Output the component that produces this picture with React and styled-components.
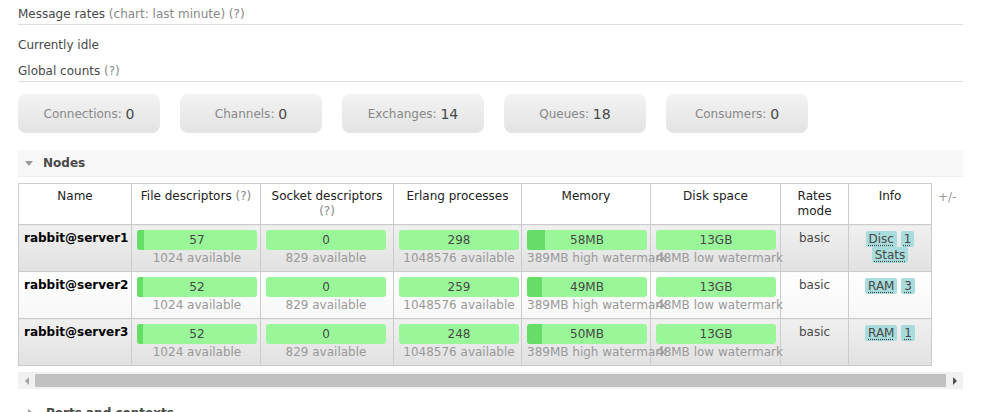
import React from 'react';
import styled, { createGlobalStyle } from 'styled-components';

const GlobalStyle = createGlobalStyle`
  html, body {
    margin: 0;
    background: #fff;
  }
  body {
    font-family: "DejaVu Sans", Verdana, sans-serif;
    font-size: 12px;
    color: #484848;
    overflow: hidden;
  }
`;

const counts = [
  { label: 'Connections', value: 0 },
  { label: 'Channels', value: 0 },
  { label: 'Exchanges', value: 14 },
  { label: 'Queues', value: 18 },
  { label: 'Consumers', value: 0 },
];

const nodes = [
  { name: 'rabbit@server1', fd: 57, sockets: 0, procs: 298, mem: 58, info: ['Disc', '1', 'Stats'] },
  { name: 'rabbit@server2', fd: 52, sockets: 0, procs: 259, mem: 49, info: ['RAM', '3'] },
  { name: 'rabbit@server3', fd: 52, sockets: 0, procs: 248, mem: 50, info: ['RAM', '1'] },
];

const StatusBar = ({ value, used, total, sub }) => (
  <>
    <Bar>
      {used > 0 && <BarFill style={{ width: `${Math.round((used / total) * 120)}px` }} />}
      <BarLabel>{value}</BarLabel>
    </Bar>
    <BarSub>{sub}</BarSub>
  </>
);

export default function App() {
  return (
    <Main>
      <GlobalStyle />
      <SubHeading>
        Message rates <Muted>(chart: last minute) (?)</Muted>
      </SubHeading>
      <Idle>Currently idle</Idle>
      <SubHeading>
        Global counts <Muted>(?)</Muted>
      </SubHeading>

      <Counts>
        {counts.map(({ label, value }) => (
          <CountBox key={label}>
            {label}: <CountValue>{value}</CountValue>
          </CountBox>
        ))}
      </Counts>

      <SectionHeader $open>
        <Toggle $open />
        Nodes
      </SectionHeader>

      <Table>
        <thead>
          <tr>
            <Th $w={113}>Name</Th>
            <Th $w={129}>
              File descriptors <Muted>(?)</Muted>
            </Th>
            <Th $w={133}>
              Socket descriptors <Muted>(?)</Muted>
            </Th>
            <Th $w={128}>Erlang processes</Th>
            <Th $w={129}>Memory</Th>
            <Th $w={130}>Disk space</Th>
            <Th $w={68}>Rates mode</Th>
            <Th $w={83}>Info</Th>
            <PlusMinus>+/-</PlusMinus>
          </tr>
        </thead>
        <tbody>
          {nodes.map((n, i) => (
            <Row key={n.name} $alt={i % 2 === 0}>
              <NameCell>{n.name}</NameCell>
              <Td>
                <StatusBar value={n.fd} used={n.fd} total={1024} sub="1024 available" />
              </Td>
              <Td>
                <StatusBar value={n.sockets} used={n.sockets} total={829} sub="829 available" />
              </Td>
              <Td>
                <StatusBar value={n.procs} used={0} total={1048576} sub="1048576 available" />
              </Td>
              <Td>
                <StatusBar value={`${n.mem}MB`} used={n.mem} total={389} sub="389MB high watermark" />
              </Td>
              <Td>
                <StatusBar value="13GB" used={0} total={1} sub="48MB low watermark" />
              </Td>
              <CenterCell>basic</CenterCell>
              <CenterCell>
                {n.info.map((b) => (
                  <React.Fragment key={b}>
                    <Badge>{b}</Badge>{' '}
                  </React.Fragment>
                ))}
              </CenterCell>
              <EmptyCell />
            </Row>
          ))}
        </tbody>
      </Table>

      <Scrollbar>
        <ScrollArrow>
          <ArrowGlyph $dir="left" />
        </ScrollArrow>
        <ScrollThumb />
        <ScrollArrow>
          <ArrowGlyph $dir="right" $active />
        </ScrollArrow>
      </Scrollbar>

      <SectionHeader>
        <Toggle />
        Ports and contexts
      </SectionHeader>
    </Main>
  );
}

const Main = styled.div`
  width: 945px;
  padding-left: 18px;
`;

const SubHeading = styled.h3`
  margin: 0;
  padding: 6px 0 2px;
  font-size: 12px;
  font-weight: normal;
  line-height: 16px;
  border-bottom: 1px solid #ddd;
`;

const Muted = styled.span`
  color: #888;
  font-weight: normal;
`;

const Idle = styled.p`
  margin: 12px 0 4px;
  line-height: 16px;
`;

const Counts = styled.div`
  display: flex;
  gap: 20px;
  margin-top: 12px;
`;

const CountBox = styled.div`
  width: 142px;
  height: 39px;
  display: flex;
  align-items: center;
  justify-content: center;
  white-space: pre;
  border-radius: 8px;
  background: linear-gradient(#f3f3f3, #e3e3e3);
  color: #888;
`;

const CountValue = styled.span`
  font-size: 14px;
  color: #484848;
`;

const SectionHeader = styled.h2`
  margin: ${(p) => (p.$open ? '17px 0 0' : '11px 0 0')};
  height: 26px;
  display: flex;
  align-items: center;
  gap: 10px;
  padding-left: 7px;
  font-size: 12px;
  font-weight: bold;
  color: #484848;
  background: ${(p) => (p.$open ? '#f8f8f8' : 'transparent')};
  border-bottom: 1px solid ${(p) => (p.$open ? '#eee' : 'transparent')};
`;

const Toggle = styled.span`
  width: 0;
  height: 0;
  ${(p) =>
    p.$open
      ? `border-left: 4px solid transparent;
         border-right: 4px solid transparent;
         border-top: 5px solid #999;`
      : `border-top: 4px solid transparent;
         border-bottom: 4px solid transparent;
         border-left: 5px solid #999;
         margin: 0 3px;`}
`;

const Table = styled.table`
  margin-top: 6px;
  border-collapse: collapse;
  table-layout: fixed;
  width: 945px;
`;

const Th = styled.th`
  box-sizing: border-box;
  width: ${(p) => p.$w}px;
  padding: 5px 4px;
  border: 1px solid #ccc;
  background: #fff;
  color: #222;
  font-weight: normal;
  line-height: 15px;
  text-align: center;
  vertical-align: top;
`;

const PlusMinus = styled.th`
  padding: 6px 0 0 6px;
  color: #999;
  font-weight: normal;
  line-height: 15px;
  text-align: left;
  vertical-align: top;
`;

const Row = styled.tr`
  td:not(:last-child) {
    background: ${(p) =>
      p.$alt ? 'linear-gradient(#f0f0f0, #e1e1e1)' : 'linear-gradient(#ffffff, #f7f7f7)'};
  }
`;

const Td = styled.td`
  padding: 5px;
  border: 1px solid #ccc;
  line-height: 15px;
  vertical-align: top;
`;

const NameCell = styled(Td)`
  padding-top: 6px;
  font-weight: bold;
  color: #000;
  white-space: nowrap;
`;

const CenterCell = styled(Td)`
  text-align: center;
  padding-top: 6px;
`;

const EmptyCell = styled.td`
  border: none;
`;

const Bar = styled.div`
  position: relative;
  width: 120px;
  height: 20px;
  line-height: 20px;
  border-radius: 3px;
  background: #99f799;
  overflow: hidden;
  text-align: center;
`;

const BarFill = styled.div`
  position: absolute;
  left: 0;
  top: 0;
  bottom: 0;
  background: #66dd66;
`;

const BarLabel = styled.span`
  position: relative;
`;

const BarSub = styled.div`
  width: 120px;
  text-align: center;
  white-space: nowrap;
  color: #999;
  line-height: 16px;
`;

const Badge = styled.abbr`
  padding: 1px 3px;
  border-radius: 2px;
  background: #a9dcdc;
  line-height: 16px;
  text-decoration: underline dotted;
  text-underline-offset: 2px;
`;

const Scrollbar = styled.div`
  display: flex;
  height: 17px;
  margin-top: 6px;
  background: #f1f1f1;
`;

const ScrollArrow = styled.div`
  width: 17px;
  display: flex;
  align-items: center;
  justify-content: center;
`;

const ArrowGlyph = styled.span`
  width: 0;
  height: 0;
  border-top: 4px solid transparent;
  border-bottom: 4px solid transparent;
  ${(p) =>
    p.$dir === 'left'
      ? `border-right: 4px solid ${p.$active ? '#505050' : '#a3a3a3'};`
      : `border-left: 4px solid ${p.$active ? '#505050' : '#a3a3a3'};`}
`;

const ScrollThumb = styled.div`
  flex: 1;
  margin: 2px 0;
  background: #c1c1c1;
`;
